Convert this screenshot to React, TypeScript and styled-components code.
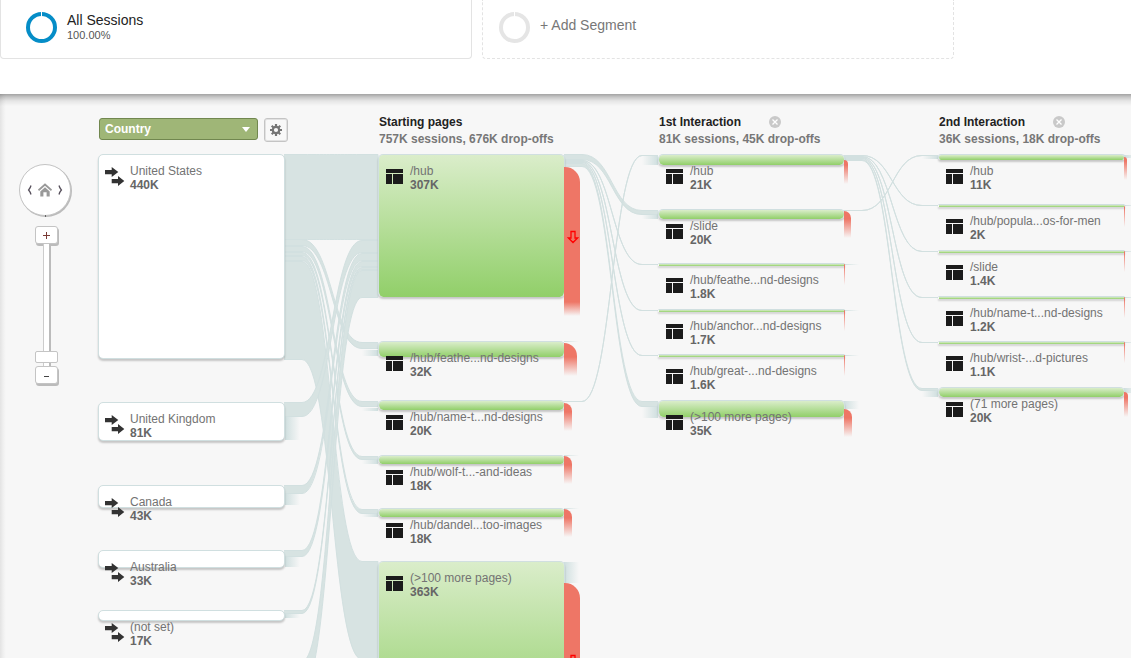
import React from "react";
import styled, { createGlobalStyle } from "styled-components";

const COLUMN = 280;
const NODE = 187;

const GlobalStyle = createGlobalStyle`
  *, *::before, *::after { box-sizing: border-box; }
  body {
    margin: 0;
    background: #fff;
    font-family: "Liberation Sans", Arial, sans-serif;
    font-size: 12px;
    color: #666;
  }
  button, select, input { font: inherit; margin: 0; }
`;

const Page = styled.div`
  display: flex;
  flex-direction: column;
  height: 100vh;
  overflow: hidden;
`;

const Segments = styled.header`
  display: grid;
  grid-template-columns: repeat(2, minmax(0, 472px));
  gap: 10px;
  padding-bottom: 35px;
`;

const Segment = styled.button<{ $empty?: boolean }>`
  display: flex;
  align-items: flex-start;
  gap: 10px;
  height: 59px;
  padding: 12px 16px 0 ${(p) => (p.$empty ? 16 : 25)}px;
  border: 1px ${(p) => (p.$empty ? "dashed" : "solid")} #e3e3e3;
  border-top: 0;
  border-radius: 0 0 4px 4px;
  background: #fff;
  text-align: left;
`;

const SegmentText = styled.span<{ $empty?: boolean }>`
  display: flex;
  flex-direction: column;
  padding-top: ${(p) => (p.$empty ? 5 : 0)}px;
  font-size: 14px;
  line-height: 16px;
  color: ${(p) => (p.$empty ? "#777" : "#222")};
`;

const SegmentShare = styled.span`
  font-size: 11px;
  line-height: 14px;
  color: #555;
`;

const Stage = styled.main`
  flex: 1;
  min-height: 0;
  display: flex;
  overflow: hidden;
  background:
    linear-gradient(rgba(0, 0, 0, 0.34), rgba(0, 0, 0, 0.2) 3px, rgba(0, 0, 0, 0.07) 7px, transparent 12px),
    linear-gradient(to right, rgba(0, 0, 0, 0.08), rgba(0, 0, 0, 0.02) 4px, transparent 6px),
    #f7f7f7;
`;

const Navigator = styled.aside`
  flex: none;
  display: flex;
  flex-direction: column;
  align-items: center;
  gap: 10px;
  width: 98px;
  padding: 70px 27px 0 19px;
`;

const PanDial = styled.div`
  position: relative;
  display: flex;
  align-items: center;
  justify-content: space-between;
  width: 52px;
  height: 52px;
  padding: 0 6px;
  border: 1px solid #c4c4c4;
  border-radius: 50%;
  background: #fff;
  box-shadow: 1px 1px 0 #bbb;
`;

const DialButton = styled.button`
  display: flex;
  padding: 0;
  border: 0;
  background: none;
`;

const DialTick = styled.span`
  position: absolute;
  left: 50%;
  top: 100%;
  width: 1px;
  height: 2px;
  background: #666;
`;

const ZoomBar = styled.div`
  display: flex;
  flex-direction: column;
  align-items: center;
  margin-left: 3px;
`;

const ZoomButton = styled.button`
  display: flex;
  align-items: center;
  justify-content: center;
  width: 23px;
  height: 18px;
  padding: 0;
  border: 1px solid #c4c4c4;
  border-radius: 3px;
  background: #fff;
  box-shadow: 1px 2px 0 #bbb;
`;

const ZoomRange = styled.input`
  appearance: none;
  writing-mode: vertical-lr;
  direction: rtl;
  width: 23px;
  height: 122px;
  background: linear-gradient(to right, #ccc 1px, #fff 1px 6px, #bbb 6px 8px) center / 8px 100% no-repeat;

  &::-webkit-slider-thumb {
    appearance: none;
    width: 23px;
    height: 12px;
    border: 1px solid #c4c4c4;
    border-radius: 2px;
    background: #fff;
  }
`;

const Flow = styled.section`
  flex: none;
`;

const Headings = styled.div`
  display: grid;
  grid-template-columns: repeat(4, ${COLUMN}px);
  height: 60px;
`;

const DimensionBar = styled.div`
  display: flex;
  align-items: flex-start;
  gap: 6px;
  padding: 24px 0 0 1px;
`;

const DimensionField = styled.label`
  position: relative;
  display: block;
`;

const DimensionSelect = styled.select`
  display: block;
  appearance: none;
  width: 159px;
  height: 22px;
  padding: 0 20px 0 5px;
  border: 1px solid #71874f;
  border-radius: 3px;
  background: #9fb677;
  color: #fff;
  font-weight: bold;
`;

const Caret = styled.svg`
  position: absolute;
  right: 8px;
  top: 9px;
  pointer-events: none;
`;

const GearButton = styled.button`
  display: flex;
  align-items: center;
  justify-content: center;
  width: 24px;
  height: 24px;
  padding: 0;
  border: 1px solid #c4c4c4;
  border-radius: 3px;
  background: #f8f8f8;
  box-shadow: inset 0 0 0 1px #e2e2e2;
`;

const Heading = styled.div`
  padding: 20px 0 0 1px;
  line-height: 17px;
  font-weight: bold;
  color: #777;
`;

const HeadingTitle = styled.h2`
  display: flex;
  align-items: center;
  gap: 28px;
  margin: 0;
  font-size: 12px;
  line-height: 17px;
  color: #222;
`;

const RemoveButton = styled.button`
  display: flex;
  padding: 0;
  border: 0;
  background: none;
`;

const Canvas = styled.div`
  position: relative;
`;

const Ribbons = styled.svg`
  position: absolute;
  left: 0;
  top: 0;
  overflow: visible;
`;

const Node = styled.article<{ $col: number; $y: number; $h: number }>`
  position: absolute;
  left: ${(p) => p.$col * COLUMN}px;
  top: ${(p) => p.$y}px;
  width: ${NODE}px;
  height: ${(p) => p.$h}px;
  border: 1px solid;
  border-color: #d0dfe0 ${(p) => (p.$h < 6 ? "transparent" : "#d0dfe0")} #d0dfe0;
  border-bottom-width: ${(p) => (p.$col === 0 ? 1 : 0)}px;
  border-radius: ${(p) => (p.$h < 6 ? 0 : 5)}px;
  background: ${(p) => (p.$col === 0 ? "#fff" : "linear-gradient(#daedca, #91cf69)")};
  background-clip: padding-box;
  box-shadow: 0 2px 2px rgba(0, 0, 0, ${(p) => (p.$h < 6 ? 0.14 : 0.2)});
`;

const NodeIcon = styled.span<{ $page: boolean }>`
  position: absolute;
  left: ${(p) => (p.$page ? 7 : 6)}px;
  top: ${(p) => (p.$page ? 14 : 12)}px;
  display: flex;
`;

const NodeLabel = styled.div`
  position: absolute;
  left: 31px;
  top: 9px;
  display: flex;
  flex-direction: column;
  line-height: 14px;
  white-space: nowrap;
`;

const NodeName = styled.span`
  color: #737373;
`;

const DropOff = styled.div<{ $y: number; $w: number; $h: number }>`
  position: absolute;
  left: 100%;
  top: ${(p) => p.$y}px;
  width: ${(p) => p.$w}px;
  height: ${(p) => p.$h}px;
  border-radius: 0 ${(p) => Math.min(p.$w, 15)}px 0 0;
  background: linear-gradient(#ee7666 calc(100% - ${(p) => (p.$h > 100 ? 14 : 19)}px), rgba(238, 118, 102, 0));
`;

const DropArrowIcon = styled.svg<{ $y: number }>`
  display: block;
  margin: ${(p) => p.$y}px 0 0 3px;
`;

type Drop = { y: number; w: number; h: number; arrow?: number };
type NodeData = { y: number; h: number; name: string; value: string; drop?: Drop };

const columns: NodeData[][] = [
  [
    { y: 0, h: 205, name: "United States", value: "440K" },
    { y: 248, h: 39, name: "United Kingdom", value: "81K" },
    { y: 331, h: 23, name: "Canada", value: "43K" },
    { y: 396, h: 18, name: "Australia", value: "33K" },
    { y: 456, h: 11, name: "(not set)", value: "17K" },
  ],
  [
    { y: 0, h: 143, name: "/hub", value: "307K", drop: { y: 12, w: 16, h: 149, arrow: 63 } },
    { y: 187, h: 16, name: "/hub/feathe...nd-designs", value: "32K", drop: { y: 1, w: 13, h: 33 } },
    { y: 246, h: 10, name: "/hub/name-t...nd-designs", value: "20K", drop: { y: 2, w: 8, h: 28 } },
    { y: 301, h: 9, name: "/hub/wolf-t...-and-ideas", value: "18K", drop: { y: 0, w: 8, h: 28 } },
    { y: 354, h: 9, name: "/hub/dandel...too-images", value: "18K", drop: { y: 0, w: 8, h: 28 } },
    { y: 407, h: 169, name: "(>100 more pages)", value: "363K", drop: { y: 21, w: 16, h: 168, arrow: 71 } },
  ],
  [
    { y: 0, h: 11, name: "/hub", value: "21K", drop: { y: 5, w: 4, h: 24 } },
    { y: 55, h: 10, name: "/slide", value: "20K", drop: { y: 1, w: 7, h: 27 } },
    { y: 109, h: 3, name: "/hub/feathe...nd-designs", value: "1.8K", drop: { y: 0, w: 1, h: 21 } },
    { y: 155, h: 3, name: "/hub/anchor...nd-designs", value: "1.7K", drop: { y: 0, w: 1, h: 21 } },
    { y: 200, h: 3, name: "/hub/great-...nd-designs", value: "1.6K", drop: { y: 0, w: 1, h: 21 } },
    { y: 246, h: 17, name: "(>100 more pages)", value: "35K", drop: { y: 8, w: 8, h: 28 } },
  ],
  [
    { y: 0, h: 6, name: "/hub", value: "11K", drop: { y: 2, w: 3, h: 23 } },
    { y: 50, h: 3, name: "/hub/popula...os-for-men", value: "2K", drop: { y: 1, w: 1, h: 21 } },
    { y: 96, h: 3, name: "/slide", value: "1.4K", drop: { y: 0, w: 1, h: 21 } },
    { y: 142, h: 3, name: "/hub/name-t...nd-designs", value: "1.2K", drop: { y: 0, w: 1, h: 21 } },
    { y: 187, h: 3, name: "/hub/wrist-...d-pictures", value: "1.1K", drop: { y: 0, w: 1, h: 21 } },
    { y: 233, h: 10, name: "(71 more pages)", value: "20K", drop: { y: 4, w: 4, h: 25 } },
  ],
];

/* column, source y, source thickness, target y, target thickness */
const links: number[][] = [
  [0, 0, 86, 0, 86],
  [0, 107, 99, 407, 99],
  [0, 85, 7, 188, 7],
  [0, 92, 6, 247, 6],
  [0, 98, 4, 302, 4],
  [0, 102, 5, 355, 5],
  [0, 248, 15, 86, 13],
  [0, 331, 9, 99, 8],
  [0, 396, 7, 107, 6],
  [0, 456, 4, 113, 3],
  [0, 507, 29, 116, 28],
  [1, 0, 6, 56, 5],
  [1, 6, 1, 110, 1],
  [1, 7, 1, 156, 1],
  [1, 8, 1, 201, 1],
  [1, 9, 4, 247, 6],
  [1, 247, 1, 1, 1],
  [2, 1, 1, 51, 1],
  [2, 2, 1, 97, 1],
  [2, 3, 1, 143, 1],
  [2, 4, 1, 188, 1],
  [2, 5, 2, 234, 3],
  [2, 56, 1, 1, 1],
];

/* x, y, height of the traffic that fades out to the right */
const fadeOut: number[][] = [
  [187, 263, 23], [187, 340, 11], [187, 403, 10], [187, 460, 4],
  [466, 187, 1], [466, 301, 1], [466, 354, 1], [466, 408, 21],
  [746, 110, 1], [746, 156, 1], [746, 201, 1], [746, 247, 8],
  [1026, 1, 3], [1026, 51, 1], [1026, 97, 1], [1026, 143, 1], [1026, 188, 1], [1026, 234, 5],
];

/* x, y, height of the traffic that fades in from the left */
const fadeIn: number[][] = [
  [264, 196, 6], [264, 254, 3], [264, 306, 4], [264, 360, 3],
  [544, 2, 9], [544, 61, 4], [544, 253, 11],
  [824, 2, 3], [824, 237, 6],
];

/* The outline is centred on the path, so the path runs half a pixel inside the band. */
const ribbonPath = ([col, sourceY, sourceH, targetY, targetH]: number[]) => {
  const sy = sourceY + 0.5;
  const ty = targetY + 0.5;
  const sb = sy + sourceH - 1;
  const tb = ty + targetH - 1;
  const a = col * COLUMN + NODE - 1;
  const b = a + 18;
  const d = (col + 1) * COLUMN;
  const c = d - 16;
  const m = (b + c) / 2;
  return `M${a} ${sy}H${b}C${m} ${sy} ${m} ${ty} ${c} ${ty}H${d}V${tb}H${c}C${m} ${tb} ${m} ${sb} ${b} ${sb}H${a}`;
};

const Ring = ({ color }: { color: string }) => (
  <svg width="31" height="31" viewBox="0 0 31 31" aria-hidden="true">
    <circle cx="15.5" cy="15.5" r="13.5" fill="none" stroke={color} strokeWidth="4" />
    <path d="M15.5 0V5" stroke="#fff" />
  </svg>
);

const Chevron = ({ left }: { left?: boolean }) => (
  <svg width="7" height="12" viewBox="0 0 7 12" fill="none" stroke="#57505c" strokeWidth="1.3" aria-hidden="true">
    <path d={left ? "M5 1.5Q4.4 4 2.6 6Q4.4 8 5 10.5" : "M2 1.5Q2.6 4 4.4 6Q2.6 8 2 10.5"} />
  </svg>
);

const House = () => (
  <svg width="14" height="14" viewBox="0 0 14 14" aria-hidden="true">
    <path d="M.5 7.3L7 1.5L13.5 7.3" fill="none" stroke="#999" strokeWidth="1.8" />
    <path d="M2.3 8.4L7 4.3L11.7 8.4V13.5H8.6V9.3H5.4V13.5H2.3Z" fill="#999" />
  </svg>
);

const Gear = () => (
  <svg width="12" height="12" viewBox="0 0 12 12" aria-hidden="true">
    <g stroke="#757575" strokeWidth="2.2">
      <path d="M6 0V12M0 6H12" />
      <path d="M1.7 1.7L10.3 10.3M10.3 1.7L1.7 10.3" strokeWidth="2" />
    </g>
    <circle cx="6" cy="6" r="3.2" fill="#f8f8f8" stroke="#757575" strokeWidth="2.2" />
  </svg>
);

const RemoveIcon = () => (
  <svg width="12" height="13" viewBox="0 0 12 13" aria-hidden="true">
    <circle cx="6" cy="6" r="6" fill="#c9c9c9" />
    <path d="M3.5 3.5L8.5 8.5M8.5 3.5L3.5 8.5" stroke="#fff" strokeWidth="1.3" />
  </svg>
);

const ArrowsIcon = () => (
  <svg width="20" height="20" viewBox="0 0 20 20" fill="#333" aria-hidden="true">
    <path d="M0 3H6.7V0L13.3 5L6.7 10V7.2H0Z" />
    <path d="M6.7 12H13V9L19.3 14L13 19V16.2H6.7Z" />
  </svg>
);

const PageIcon = () => (
  <svg width="17" height="15" viewBox="0 0 17 15" fill="#1b1b1b" aria-hidden="true">
    <path d="M0 0H17V4H0ZM0 5H6V15H0ZM7 5H17V15H7Z" />
  </svg>
);

const DropArrow = ({ y }: { y: number }) => (
  <DropArrowIcon $y={y} width="12" height="14" viewBox="0 0 12 14" fill="none" stroke="#f00" strokeWidth="1.3" aria-hidden="true">
    <path d="M4 1.5H8V8H10.5L6 12.5L1.5 8H4Z" />
  </DropArrowIcon>
);

const headings = [
  { title: "Starting pages", detail: "757K sessions, 676K drop-offs", removable: false },
  { title: "1st Interaction", detail: "81K sessions, 45K drop-offs", removable: true },
  { title: "2nd Interaction", detail: "36K sessions, 18K drop-offs", removable: true },
];

export default function App() {
  return (
    <>
      <GlobalStyle />
      <Page>
        <Segments>
          <Segment type="button">
            <Ring color="#058dc7" />
            <SegmentText>
              All Sessions
              <SegmentShare>100.00%</SegmentShare>
            </SegmentText>
          </Segment>
          <Segment type="button" $empty>
            <Ring color="#e5e5e5" />
            <SegmentText $empty>+ Add Segment</SegmentText>
          </Segment>
        </Segments>

        <Stage>
          <Navigator>
            <PanDial>
              <DialButton type="button" aria-label="Pan left"><Chevron left /></DialButton>
              <DialButton type="button" aria-label="Home"><House /></DialButton>
              <DialButton type="button" aria-label="Pan right"><Chevron /></DialButton>
              <DialTick />
            </PanDial>
            <ZoomBar>
              <ZoomButton type="button" aria-label="Zoom in">
                <svg width="9" height="9" viewBox="0 0 9 9" stroke="#7a3a34" aria-hidden="true"><path d="M4.5 1V8M1 4.5H8" /></svg>
              </ZoomButton>
              <ZoomRange type="range" aria-label="Zoom level" defaultValue={3} />
              <ZoomButton type="button" aria-label="Zoom out">
                <svg width="9" height="9" viewBox="0 0 9 9" stroke="#444" aria-hidden="true"><path d="M2 5.5H7" /></svg>
              </ZoomButton>
            </ZoomBar>
          </Navigator>

          <Flow>
            <Headings>
              <DimensionBar>
                <DimensionField>
                  <DimensionSelect aria-label="Dimension" defaultValue="Country">
                    <option>Country</option>
                  </DimensionSelect>
                  <Caret width="8" height="5" viewBox="0 0 8 5"><path d="M0 0H8L4 5Z" fill="#fff" /></Caret>
                </DimensionField>
                <GearButton type="button" aria-label="Settings"><Gear /></GearButton>
              </DimensionBar>
              {headings.map((h) => (
                <Heading key={h.title}>
                  <HeadingTitle>
                    {h.title}
                    {h.removable && (
                      <RemoveButton type="button" aria-label={`Remove ${h.title}`}><RemoveIcon /></RemoveButton>
                    )}
                  </HeadingTitle>
                  {h.detail}
                </Heading>
              ))}
            </Headings>

            <Canvas>
              <Ribbons width={COLUMN * 4} height="600" aria-hidden="true">
                <defs>
                  <linearGradient id="fadeOut">
                    <stop offset="0" stopColor="#cfdfdf" />
                    <stop offset="1" stopColor="#cfdfdf" stopOpacity="0" />
                  </linearGradient>
                  <linearGradient id="fadeIn">
                    <stop offset="0" stopColor="#cfdfdf" stopOpacity="0" />
                    <stop offset="1" stopColor="#cfdfdf" />
                  </linearGradient>
                </defs>
                {fadeOut.map(([x, y, h]) => (
                  <rect key={`o${x}-${y}`} x={x} y={y} width="15" height={h} fill="url(#fadeOut)" />
                ))}
                {fadeIn.map(([x, y, h]) => (
                  <rect key={`i${x}-${y}`} x={x} y={y} width="16" height={h} fill="url(#fadeIn)" />
                ))}
                {links.map((l) => (
                  <path key={l.join()} d={ribbonPath(l)} fill="#d7e3e2" stroke="#d2e0e0" />
                ))}
              </Ribbons>
              {columns.map((nodes, col) =>
                nodes.map((n) => (
                  <Node key={`${col}-${n.name}`} $col={col} $y={n.y} $h={n.h}>
                    {n.drop && (
                      <DropOff $y={n.drop.y} $w={n.drop.w} $h={n.drop.h}>
                        {n.drop.arrow && <DropArrow y={n.drop.arrow} />}
                      </DropOff>
                    )}
                    <NodeIcon $page={col > 0}>{col > 0 ? <PageIcon /> : <ArrowsIcon />}</NodeIcon>
                    <NodeLabel>
                      <NodeName>{n.name}</NodeName>
                      <strong>{n.value}</strong>
                    </NodeLabel>
                  </Node>
                )),
              )}
            </Canvas>
          </Flow>
        </Stage>
      </Page>
    </>
  );
}
